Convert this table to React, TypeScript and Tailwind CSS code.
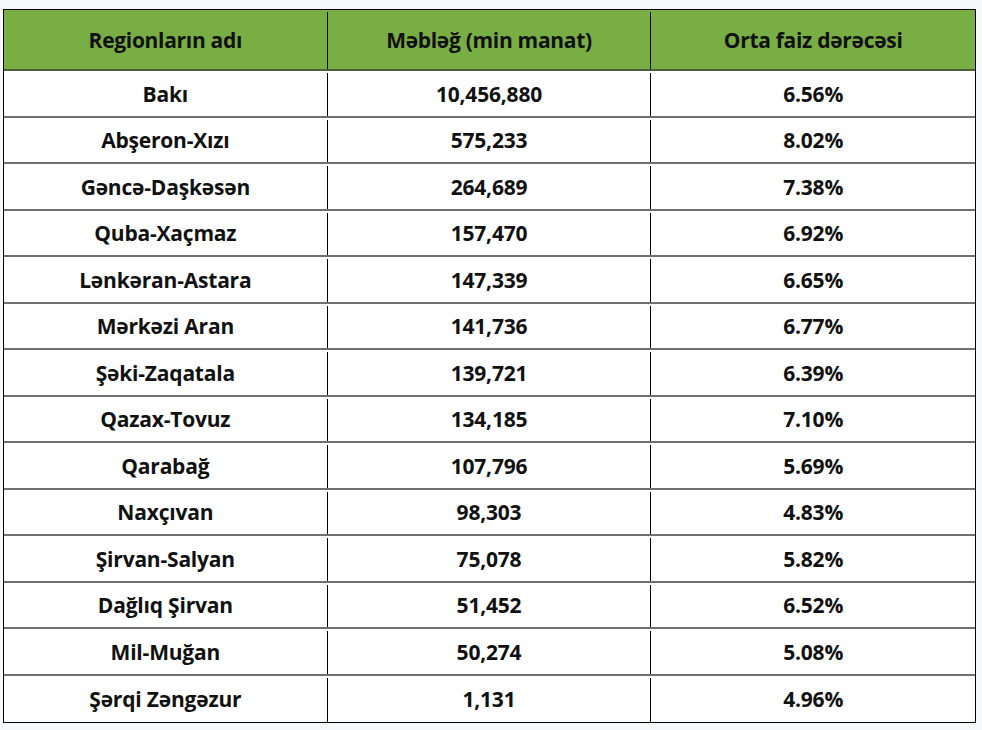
const ROWS = [
  ['Bakı', '10,456,880', '6.56%'],
  ['Abşeron-Xızı', '575,233', '8.02%'],
  ['Gəncə-Daşkəsən', '264,689', '7.38%'],
  ['Quba-Xaçmaz', '157,470', '6.92%'],
  ['Lənkəran-Astara', '147,339', '6.65%'],
  ['Mərkəzi Aran', '141,736', '6.77%'],
  ['Şəki-Zaqatala', '139,721', '6.39%'],
  ['Qazax-Tovuz', '134,185', '7.10%'],
  ['Qarabağ', '107,796', '5.69%'],
  ['Naxçıvan', '98,303', '4.83%'],
  ['Şirvan-Salyan', '75,078', '5.82%'],
  ['Dağlıq Şirvan', '51,452', '6.52%'],
  ['Mil-Muğan', '50,274', '5.08%'],
  ['Şərqi Zəngəzur', '1,131', '4.96%'],
];

export default function App() {
  return (
    <div className="w-[982px] h-[730px] bg-[#f7f8fa] pt-[9px] pl-[3px] font-['Open_Sans',sans-serif] font-bold text-[#111]">
      <div className="w-[973px] border-[1.5px] border-black bg-white">
        <div className="grid grid-cols-3 h-[61px] bg-[#78ae44] border-b-2 border-[#4d5e3c] text-[21px] tracking-[-0.3px] pt-[2px]">
          <div className="flex items-center justify-center border-r-[1.5px] border-black">Regionların adı</div>
          <div className="flex items-center justify-center border-r-[1.5px] border-black">Məbləğ (min manat)</div>
          <div className="flex items-center justify-center">Orta faiz dərəcəsi</div>
        </div>
        {ROWS.map((r, i) => (
          <div
            key={r[0]}
            className={`grid grid-cols-3 h-[46.5px] text-[21px] tracking-[-0.2px] pt-[2px] ${i < ROWS.length - 1 ? 'border-b-2 border-[#707070]' : ''}`}
          >
            <div className="flex items-center justify-center border-r-[1.5px] border-black">{r[0]}</div>
            <div className="flex items-center justify-center border-r-[1.5px] border-black">{r[1]}</div>
            <div className="flex items-center justify-center">{r[2]}</div>
          </div>
        ))}
      </div>
    </div>
  );
}
